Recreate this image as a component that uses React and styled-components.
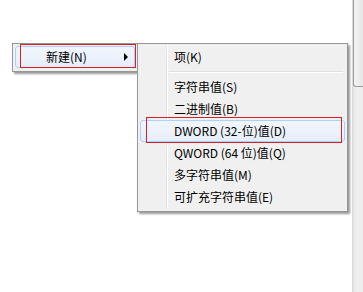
import React from 'react';
import styled, { createGlobalStyle } from 'styled-components';

const GlobalStyle = createGlobalStyle`
  html, body {
    margin: 0;
    padding: 0;
    background: #ffffff;
  }
  body {
    font-family: "Noto Sans CJK SC", "Liberation Sans", sans-serif;
    font-size: 12px;
    color: #000;
  }
`;

const Window = styled.div`
  display: flex;
  width: 363px;
  height: 292px;
  overflow: hidden;
`;

const Canvas = styled.div`
  position: relative;
  flex: 1;
  background: #ffffff;
`;

const ScrollTrack = styled.div`
  width: 10px;
  display: flex;
  flex-direction: column;
  background: linear-gradient(to right, #e4e4e4, #f0f0f0 40%, #ececec);
  border-left: 1px solid #dcdcdc;
`;

const ScrollThumb = styled.div`
  height: 87px;
  border: 1px solid #9a9a9a;
  border-top: none;
  border-right: none;
  border-bottom-left-radius: 3px;
  background: linear-gradient(to right, #f4f4f4, #e6e6e6);
  box-sizing: border-box;
`;

const Menu = styled.div`
  position: absolute;
  left: ${(p) => p.$left}px;
  top: ${(p) => p.$top}px;
  width: ${(p) => p.$width}px;
  box-sizing: border-box;
  padding: 2px 2px 3px;
  background: #f0f0f0;
  border: 1px solid #979797;
  box-shadow: 2px 2px 2px rgba(0, 0, 0, 0.4);
  display: flex;
  flex-direction: column;
`;

const Gutter = styled.div`
  position: absolute;
  left: 28px;
  top: 2px;
  bottom: 2px;
  width: 1px;
  background: #e2e3e3;
  border-right: 1px solid #ffffff;
`;

const Item = styled.div`
  position: relative;
  height: 22px;
  display: flex;
  align-items: center;
  padding-left: ${(p) => p.$indent}px;
  box-sizing: border-box;
  line-height: 22px;
  white-space: nowrap;
  border: 1px solid transparent;
  border-radius: 3px;
  ${(p) =>
    p.$hover &&
    `
    background: linear-gradient(to bottom, #f1f6fc, #e6eefa);
    border-color: #aecff7;
  `}
`;

const Label = styled.span`
  flex: 1;
`;

const Arrow = styled.span`
  width: 0;
  height: 0;
  margin-right: 6px;
  border-top: 4px solid transparent;
  border-bottom: 4px solid transparent;
  border-left: 4px solid #000;
`;

const Separator = styled.div`
  height: 1px;
  margin: 3px 2px 3px 29px;
  background: #e0e0e0;
  border-bottom: 1px solid #ffffff;
`;

const Mark = styled.div`
  position: absolute;
  left: ${(p) => p.$left}px;
  top: ${(p) => p.$top}px;
  width: ${(p) => p.$width}px;
  height: ${(p) => p.$height}px;
  border: 1px solid #d3222a;
  box-sizing: border-box;
  pointer-events: none;
`;

const items = [
  '字符串值(S)',
  '二进制值(B)',
  'DWORD (32-位)值(D)',
  'QWORD (64 位)值(Q)',
  '多字符串值(M)',
  '可扩充字符串值(E)',
];

export default function App() {
  return (
    <>
      <GlobalStyle />
      <Window>
        <Canvas>
          <Menu $left={12} $top={43} $width={126}>
            <Item $indent={30} $hover>
              <Label>新建(N)</Label>
              <Arrow />
            </Item>
          </Menu>
          <Menu $left={137} $top={43} $width={211}>
            <Gutter />
            <Item $indent={33}>项(K)</Item>
            <Separator />
            {items.map((label, i) => (
              <Item key={label} $indent={33} $hover={i === 2}>
                {label}
              </Item>
            ))}
          </Menu>
          <Mark $left={20} $top={44} $width={116} $height={24} />
          <Mark $left={146} $top={117} $width={196} $height={26} />
        </Canvas>
        <ScrollTrack>
          <ScrollThumb />
        </ScrollTrack>
      </Window>
    </>
  );
}
